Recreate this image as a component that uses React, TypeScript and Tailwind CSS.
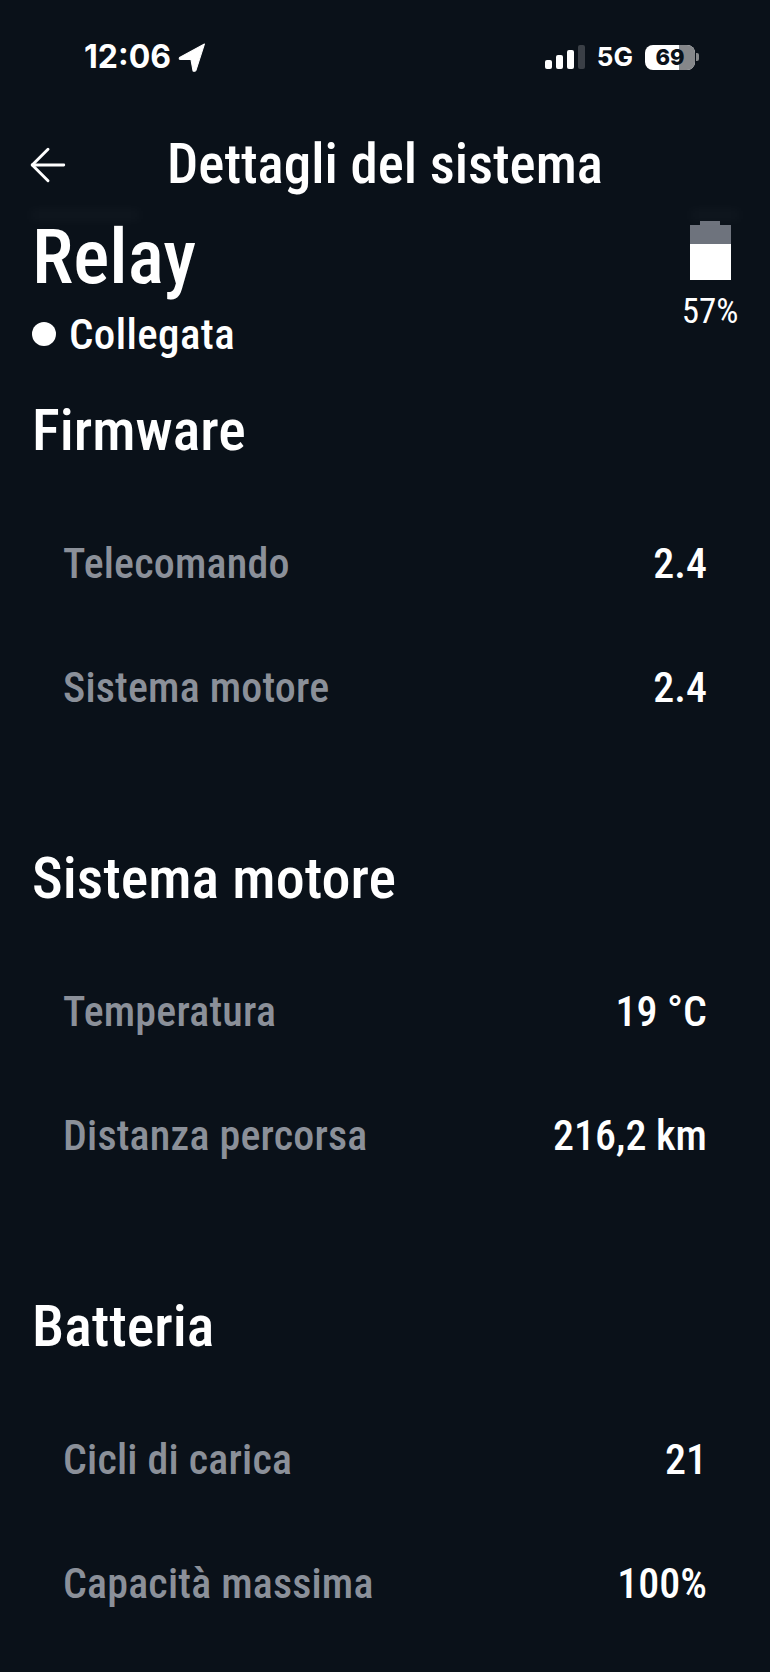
import { ArrowLeft } from "lucide-react"

const sections = [
  {
    title: "Firmware",
    rows: [
      { label: "Telecomando", value: "2.4" },
      { label: "Sistema motore", value: "2.4" },
    ],
  },
  {
    title: "Sistema motore",
    rows: [
      { label: "Temperatura", value: "19 °C" },
      { label: "Distanza percorsa", value: "216,2 km" },
    ],
  },
  {
    title: "Batteria",
    rows: [
      { label: "Cicli di carica", value: "21" },
      { label: "Capacità massima", value: "100%" },
    ],
  },
]

function StatusBar() {
  return (
    <div className="flex h-[112px] items-start justify-between pt-[40px] pl-[84px] pr-[71px]">
      <div className="flex h-[34px] items-center gap-[7px]">
        <span className="font-['Inter',sans-serif] text-[32px] font-bold leading-none text-white">12:06</span>
        <svg width="28" height="29" viewBox="0 0 26 28">
          <path d="M25 1 L1 14 Q0 16 2 16 L12 16 L14 27 Q16 28 17 26 Z" fill="#fff" stroke="#fff" strokeLinejoin="round" />
        </svg>
      </div>
      <div className="flex h-[34px] items-center">
        <div className="flex items-end gap-[4px]">
          <div className="h-[9px] w-[7px] rounded-[2px] bg-white" />
          <div className="h-[14px] w-[7px] rounded-[2px] bg-white" />
          <div className="h-[19px] w-[7px] rounded-[2px] bg-white" />
          <div className="h-[24px] w-[7px] rounded-[2px] bg-[#3a3f46]" />
        </div>
        <span className="ml-[12px] font-['Inter',sans-serif] text-[26px] font-bold leading-none text-white">5G</span>
        <div className="relative ml-[12px] flex h-[25px] w-[50px] items-center justify-center overflow-hidden rounded-[8px] bg-white">
          <div className="absolute inset-y-0 right-0 w-[16px] bg-[#85878a]" />
          <span className="relative font-['Inter',sans-serif] text-[22px] font-extrabold leading-none text-[#0a1119]">69</span>
        </div>
        <div className="ml-[1px] h-[8px] w-[3px] rounded-r-[2px] bg-[#85878a]" />
      </div>
    </div>
  )
}

function App() {
  return (
    <div className="h-[1672px] w-[770px] overflow-hidden bg-[#0a1119] font-['Roboto',sans-serif] font-stretch-condensed text-white">
      <StatusBar />

      <div className="relative flex h-[106px] items-center justify-center pb-[1px]">
        <ArrowLeft className="absolute left-[21px] top-[26px]" size={54} strokeWidth={1.3} />
        <h1 className="text-[55px] font-medium leading-none">Dettagli del sistema</h1>
      </div>

      <div className="relative flex items-start justify-between pl-[32px] pr-[32px]">
        <div className="absolute left-[30px] top-[-8px] h-[10px] w-[110px] bg-white/[0.03] blur-[6px]" />
        <div className="absolute right-[30px] top-[-8px] h-[10px] w-[50px] bg-white/[0.03] blur-[6px]" />
        <div>
          <h2 className="pt-[4px] text-[76px] font-medium leading-[70px]">Relay</h2>
          <div className="mt-[17px] flex items-center gap-[13px]">
            <div className="h-[24px] w-[24px] rounded-full bg-white" />
            <span className="text-[43px] font-medium leading-[50px] tracking-[0.4px]">Collegata</span>
          </div>
        </div>
        <div className="flex w-[56px] flex-col items-center pt-[3px]">
          <div className="h-[4px] w-[20px] bg-[#6e737d]" />
          <div className="flex h-[55px] w-[41px] flex-col">
            <div className="h-[19px] bg-[#6e737d]" />
            <div className="flex-1 bg-white" />
          </div>
          <span className="mt-[14px] text-[35px] leading-none">57%</span>
        </div>
      </div>

      <div className="flex flex-col gap-[131px] px-[32px] pt-[41px]">
        {sections.map((section) => (
          <section key={section.title}>
            <h3 className="text-[58px] font-medium leading-[60px]">{section.title}</h3>
            <div className="mt-[73px] flex flex-col gap-[64px]">
              {section.rows.map((row) => (
                <div className="flex h-[60px] items-center justify-between pl-[31px] pr-[31px]" key={row.label}>
                  <span className="text-[42px] font-medium tracking-[0.2px] text-[#8b9099]">{row.label}</span>
                  <span className="text-[42px] font-medium">{row.value}</span>
                </div>
              ))}
            </div>
          </section>
        ))}
      </div>
    </div>
  )
}

export default App
